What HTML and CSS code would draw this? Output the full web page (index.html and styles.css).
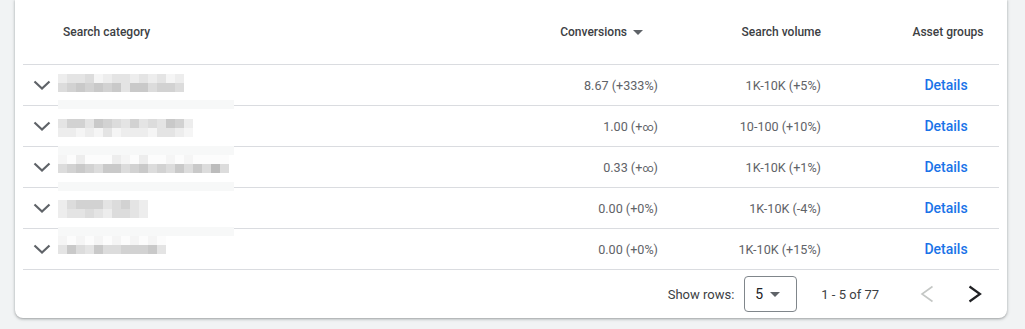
FILE: index.html
```html
<!DOCTYPE html>
<html>
<head>
<meta charset="utf-8">
<link rel="stylesheet" href="styles.css">
</head>
<body>
<div class="page">
  <div class="card">
    <div class="table">
      <div class="row head">
        <div class="cell name-h">Search category</div>
        <div class="cell conv-h">Conversions<svg class="sort" width="10" height="5" viewBox="0 0 10 5"><path d="M0 0L5 5L10 0Z"/></svg></div>
        <div class="cell vol">Search volume</div>
        <div class="cell asset">Asset groups</div>
      </div>

      <div class="row body r1">
        <div class="cell name">
          <svg class="chev" width="18" height="11" viewBox="0 0 18 11"><polyline points="1.5,1.5 9,8.5 16.5,1.5"/></svg>
          <div class="mosaic">
            <div class="mrow"><i class="s2"></i><i class="s3"></i><i class="s3"></i><i class="s4"></i><i class="s1"></i><i class="s2"></i><i class="s3"></i><i class="s3"></i><i class="s2"></i><i class="s3"></i><i class="s2"></i><i class="s3"></i><i class="s1"></i><i class="s2"></i></div>
            <div class="mrow"><i class="s4"></i><i class="s5"></i><i class="s6"></i><i class="s5"></i><i class="s6"></i><i class="s5"></i><i class="s6"></i><i class="s3"></i><i class="s6"></i><i class="s6"></i><i class="s4"></i><i class="s5"></i><i class="s5"></i><i class="s4"></i></div>
          </div>
          <div class="strip"></div>
        </div>
        <div class="cell conv">8.67 (+333%)</div>
        <div class="cell vol">1K-10K (+5%)</div>
        <div class="cell asset"><a class="details">Details</a></div>
      </div>

      <div class="row body r2">
        <div class="cell name">
          <svg class="chev" width="18" height="11" viewBox="0 0 18 11"><polyline points="1.5,1.5 9,8.5 16.5,1.5"/></svg>
          <div class="mosaic">
            <div class="mrow"><i class="s3"></i><i class="s5"></i><i class="s5"></i><i class="s3"></i><i class="s6"></i><i class="s5"></i><i class="s4"></i><i class="s3"></i><i class="s5"></i><i class="s3"></i><i class="s4"></i><i class="s3"></i><i class="s6"></i><i class="s5"></i><i class="s2"></i></div>
            <div class="mrow"><i class="s2"></i><i class="s2"></i><i class="s1"></i><i class="s2"></i><i class="s1"></i><i class="s3"></i><i class="s1"></i><i class="s2"></i><i class="s2"></i><i class="s2"></i><i class="s1"></i><i class="s3"></i><i class="s3"></i><i class="s2"></i><i class="s1"></i></div>
          </div>
          <div class="strip"></div>
        </div>
        <div class="cell conv">1.00 (+<span class="inf">∞</span>)</div>
        <div class="cell vol">10-100 (+10%)</div>
        <div class="cell asset"><a class="details">Details</a></div>
      </div>

      <div class="row body r3">
        <div class="cell name">
          <svg class="chev" width="18" height="11" viewBox="0 0 18 11"><polyline points="1.5,1.5 9,8.5 16.5,1.5"/></svg>
          <div class="mosaic">
            <div class="mrow"><i class="s1"></i><i class="s0"></i><i class="s2"></i><i class="s0"></i><i class="s0"></i><i class="s0"></i><i class="s2"></i><i class="s1"></i><i class="s0"></i><i class="s2"></i><i class="s0"></i><i class="s0"></i><i class="s1"></i><i class="s0"></i><i class="s1"></i><i class="s0"></i><i class="s0"></i><i class="s0"></i><i class="s0"></i></div>
            <div class="mrow"><i class="s4"></i><i class="s5"></i><i class="s6"></i><i class="s5"></i><i class="s4"></i><i class="s6"></i><i class="s6"></i><i class="s4"></i><i class="s5"></i><i class="s6"></i><i class="s4"></i><i class="s5"></i><i class="s4"></i><i class="s6"></i><i class="s4"></i><i class="s6"></i><i class="s4"></i><i class="s7"></i><i class="s4"></i></div>
          </div>
          <div class="strip"></div>
        </div>
        <div class="cell conv">0.33 (+<span class="inf">∞</span>)</div>
        <div class="cell vol">1K-10K (+1%)</div>
        <div class="cell asset"><a class="details">Details</a></div>
      </div>

      <div class="row body r4">
        <div class="cell name">
          <svg class="chev" width="18" height="11" viewBox="0 0 18 11"><polyline points="1.5,1.5 9,8.5 16.5,1.5"/></svg>
          <div class="mosaic">
            <div class="mrow"><i class="s2"></i><i class="s4"></i><i class="s5"></i><i class="s5"></i><i class="s5"></i><i class="s3"></i><i class="s4"></i><i class="s5"></i><i class="s3"></i><i class="s2"></i></div>
            <div class="mrow"><i class="s2"></i><i class="s3"></i><i class="s3"></i><i class="s4"></i><i class="s3"></i><i class="s2"></i><i class="s4"></i><i class="s4"></i><i class="s3"></i><i class="s2"></i></div>
          </div>
          <div class="strip"></div>
        </div>
        <div class="cell conv">0.00 (+0%)</div>
        <div class="cell vol">1K-10K (-4%)</div>
        <div class="cell asset"><a class="details">Details</a></div>
      </div>

      <div class="row body r5">
        <div class="cell name">
          <svg class="chev" width="18" height="11" viewBox="0 0 18 11"><polyline points="1.5,1.5 9,8.5 16.5,1.5"/></svg>
          <div class="mosaic">
            <div class="mrow"><i class="s1"></i><i class="s0"></i><i class="s1"></i><i class="s0"></i><i class="s1"></i><i class="s0"></i><i class="s1"></i><i class="s0"></i><i class="s1"></i><i class="s0"></i><i class="s1"></i><i class="s0"></i></div>
            <div class="mrow"><i class="s3"></i><i class="s6"></i><i class="s4"></i><i class="s3"></i><i class="s6"></i><i class="s4"></i><i class="s4"></i><i class="s5"></i><i class="s5"></i><i class="s5"></i><i class="s6"></i><i class="s3"></i></div>
          </div>
        </div>
        <div class="cell conv">0.00 (+0%)</div>
        <div class="cell vol">1K-10K (+15%)</div>
        <div class="cell asset"><a class="details">Details</a></div>
      </div>
    </div>

    <div class="footer">
      <span class="label">Show rows:</span>
      <div class="select"><span>5</span><svg width="10" height="5" viewBox="0 0 10 5"><path d="M0 0L5 5L10 0Z"/></svg></div>
      <span class="range">1 - 5 of 77</span>
      <div class="pager">
        <button class="pbtn prev"><svg width="14" height="18" viewBox="0 0 14 18"><polyline points="12.5,1.5 2,9 12.5,16.5"/></svg></button>
        <button class="pbtn next"><svg width="14" height="18" viewBox="0 0 14 18"><polyline points="1.5,1.5 12,9 1.5,16.5"/></svg></button>
      </div>
    </div>
  </div>
</div>
</body>
</html>
```

FILE: styles.css
```css
html, body {
  margin: 0;
  background: #f1f3f4;
}
body {
  font-family: Roboto, "Liberation Sans", sans-serif;
}
.page {
  padding: 0 18px 11px 15px;
}
.card {
  background: #fff;
  border-radius: 0 0 8px 8px;
  box-shadow: 0 1px 2px rgba(60, 64, 67, 0.3), 0 1px 3px 1px rgba(60, 64, 67, 0.15);
  padding: 0 8px;
}
.row {
  display: grid;
  grid-template-columns: 1fr 174px 163px 162px;
  border-bottom: 1px solid #dadce0;
  align-items: center;
}
.head {
  height: 62px;
  padding-top: 1px;
  padding-bottom: 1px;
  font-size: 12px;
  font-weight: 500;
  color: #3c4043;
}
.body {
  height: 40px;
  font-size: 12.6px;
  color: #5f6368;
}
.cell {
  white-space: nowrap;
}
.name-h {
  padding-left: 40px;
}
.conv-h {
  display: flex;
  justify-content: flex-end;
  align-items: center;
  padding-right: 31px;
}
.sort {
  margin-left: 6px;
  fill: #5f6368;
}
.conv {
  text-align: right;
  padding-right: 16px;
}
.vol {
  text-align: right;
  padding-right: 16px;
}
.asset {
  text-align: center;
  padding: 0 16px 0 72px;
}
.head .asset {
  padding: 0 14px 0 74px;
}
.inf {
  font-size: 11px;
}
.details {
  color: #1a73e8;
  font-size: 14px;
  font-weight: 500;
}
.name {
  position: relative;
  height: 40px;
  display: flex;
  align-items: center;
  padding-left: 10px;
}
.chev {
  fill: none;
  stroke: #5f6368;
  stroke-width: 2.2;
}
.mosaic {
  position: absolute;
  left: 35px;
  display: flex;
  flex-direction: column;
}
.mrow {
  display: flex;
}
.mrow i {
  width: 9px;
  height: 9px;
}
.s0 { background: #fcfcfc; }
.s1 { background: #f5f5f5; }
.s2 { background: #ededed; }
.s3 { background: #e4e4e4; }
.s4 { background: #dcdcdc; }
.s5 { background: #d2d2d2; }
.s6 { background: #c9c9c9; }
.s7 { background: #bcbcbc; }
.strip {
  position: absolute;
  left: 35px;
  width: 176px;
  height: 9px;
  background: #f7f8f8;
  z-index: 1;
}
.r1 .mosaic { top: 9px; }
.r1 .strip { top: 35px; }
.r2 .mosaic { top: 13px; }
.r2 .strip { top: 40px; }
.r3 .mosaic { top: 8px; }
.r3 .strip { top: 35px; }
.r4 .mosaic { top: 12px; }
.r4 .strip { top: 39px; }
.r5 .mosaic { top: 7px; }

.footer {
  height: 48px;
  display: flex;
  justify-content: flex-end;
  align-items: center;
  padding-right: 4px;
  font-size: 13px;
  color: #3c4043;
}
.label {
  margin-right: 10px;
}
.select {
  box-sizing: border-box;
  width: 53px;
  height: 36px;
  border: 1px solid #80868b;
  border-radius: 4px;
  display: flex;
  align-items: center;
  padding-left: 10px;
  color: #202124;
  font-size: 14px;
}
.select svg {
  margin-left: 7px;
  fill: #5f6368;
}
.range {
  margin-left: 24px;
  margin-right: 28px;
}
.pager {
  display: flex;
  gap: 8px;
}
.pbtn {
  width: 40px;
  height: 40px;
  border: 0;
  padding: 0;
  background: transparent;
  display: flex;
  align-items: center;
  justify-content: center;
}
.pbtn svg {
  fill: none;
}
.prev svg {
  stroke: #c4c7c5;
  stroke-width: 1.6;
}
.next svg {
  stroke: #202124;
  stroke-width: 2.2;
}
```
